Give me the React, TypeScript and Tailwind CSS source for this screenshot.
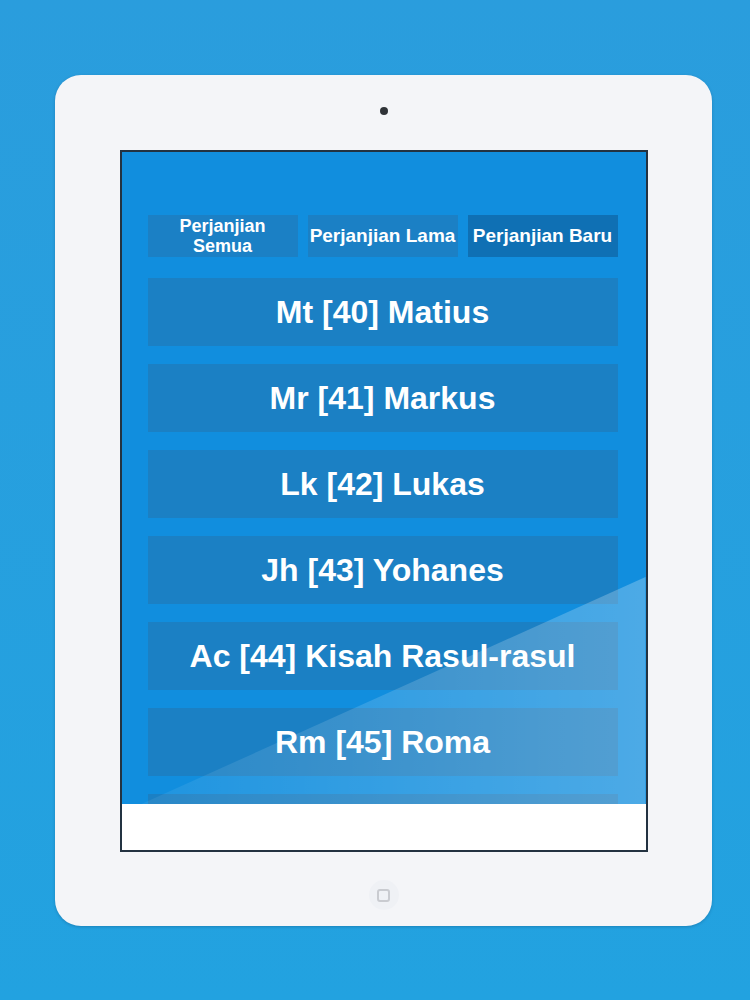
const books = [
  'Mt [40] Matius',
  'Mr [41] Markus',
  'Lk [42] Lukas',
  'Jh [43] Yohanes',
  'Ac [44] Kisah Rasul-rasul',
  'Rm [45] Roma',
  '',
];

const tabs = [
  { label: 'Perjanjian Semua', active: false, wrap: true },
  { label: 'Perjanjian Lama', active: false, wrap: false },
  { label: 'Perjanjian Baru', active: true, wrap: false },
];

export default function App() {
  return (
    <div
      className="w-[750px] h-[1000px] overflow-hidden bg-gradient-to-b from-[#2a9ddd] to-[#22a2e0] pt-[75px] pl-[55px]"
      style={{ fontFamily: '"Liberation Sans", Arial, sans-serif' }}
    >
      {/* Tablet frame */}
      <div className="w-[657px] h-[851px] rounded-[26px] bg-[#f4f5f8] shadow-[0_1px_3px_rgba(0,40,80,0.25)] flex flex-col items-center">
        {/* Camera */}
        <div className="mt-[32px] w-[8px] h-[8px] rounded-full bg-[#2f3338]" />

        {/* Screen */}
        <div className="mt-[35px] w-[528px] h-[702px] border-2 border-[#233241] flex flex-col overflow-hidden">
          <div className="relative h-[652px] bg-[#118ede] overflow-hidden px-[26px] pt-[63px] flex flex-col">
            {/* Tabs */}
            <div className="flex gap-[10px] w-[470px]">
              {tabs.map((t) => (
                <div
                  key={t.label}
                  className={`w-[150px] h-[42px] flex items-center justify-center text-center text-white font-bold text-[19px] leading-[20px] whitespace-nowrap ${
                    t.active ? 'bg-[#0f70b4]' : 'bg-[#1b80c5]'
                  }`}
                >
                  {t.wrap ? (
                    <span className="text-[18px] leading-[20px]">
                      Perjanjian
                      <br />
                      Semua
                    </span>
                  ) : (
                    <span>{t.label}</span>
                  )}
                </div>
              ))}
            </div>

            {/* Book list */}
            <div className="mt-[21px] flex flex-col gap-[18px] w-[470px]">
              {books.map((b, i) => (
                <div
                  key={i}
                  className="h-[68px] shrink-0 bg-[#1b80c4] flex items-center justify-center text-white font-bold text-[32px] whitespace-nowrap"
                >
                  {b}
                </div>
              ))}
            </div>

            {/* Glossy reflection */}
            <div className="pointer-events-none absolute inset-0 bg-gradient-to-r from-white/5 to-white/25 [clip-path:polygon(100%_425px,100%_100%,20px_100%)]" />
          </div>
          <div className="flex-1 bg-white" />
        </div>

        {/* Home button */}
        <div className="mt-[28px] w-[30px] h-[30px] rounded-full bg-[#eff1f5] flex items-center justify-center">
          <div className="w-[13px] h-[13px] rounded-[3px] border-2 border-[#c9cbd0]" />
        </div>
      </div>
    </div>
  );
}
